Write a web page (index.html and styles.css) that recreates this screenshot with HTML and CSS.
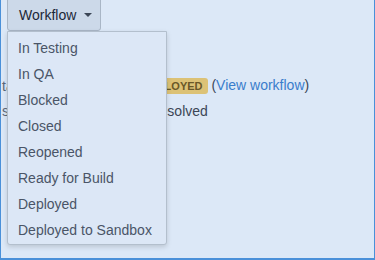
FILE: index.html
```html
<!DOCTYPE html>
<html lang="en">
<head>
    <meta charset="UTF-8">
    <title>Workflow</title>
    <link rel="stylesheet" href="styles.css">
</head>
<body>
    <div class="frame">
        <div class="toolbar">
            <div class="dropdown">
                <button class="dropdown-btn">Workflow <span class="caret"></span></button>
                <ul class="dropdown-menu">
                    <li>In Testing</li>
                    <li>In QA</li>
                    <li>Blocked</li>
                    <li>Closed</li>
                    <li>Reopened</li>
                    <li>Ready for Build</li>
                    <li>Deployed</li>
                    <li>Deployed to Sandbox</li>
                </ul>
            </div>
        </div>

        <div class="details">
            <div class="detail-label">tatus:</div>
            <div class="detail-value"><span class="badge">Deployed</span> (<a href="#">View workflow</a>)</div>
            <div class="detail-label">solution:</div>
            <div class="detail-value">Unresolved</div>
        </div>
    </div>
</body>
</html>
```

FILE: styles.css
```css
* {
    margin: 0;
    padding: 0;
    box-sizing: border-box;
}

body {
    font-family: 'Liberation Sans', Arial, sans-serif;
    font-size: 14px;
    color: #3b4656;
    background: #dce8f7;
}

.frame {
    height: 260px;
    background: #dce8f7;
    border-left: 1px solid #4a90d9;
    border-right: 1px solid #4a90d9;
    border-bottom: 2px solid #4a90d9;
    overflow: hidden;
}

.toolbar {
    padding-left: 6px;
    height: 31px;
}

.dropdown {
    position: relative;
    display: inline-block;
}

.dropdown-btn {
    display: flex;
    align-items: center;
    gap: 8px;
    width: 94px;
    height: 32px;
    margin-top: -1px;
    padding: 0 0 0 11px;
    font-family: inherit;
    font-size: 14px;
    color: #1b2838;
    background: #ccd9e9;
    border: 1px solid #a9b6c6;
    border-radius: 0 0 3px 3px;
}

.caret {
    width: 0;
    height: 0;
    border-left: 4px solid transparent;
    border-right: 4px solid transparent;
    border-top: 4px solid #3b4656;
}

.dropdown-menu {
    position: absolute;
    top: 31px;
    left: 0;
    width: 160px;
    list-style: none;
    padding: 3px 0 1px;
    background: #dce7f6;
    border: 1px solid #b3bfcd;
    border-radius: 0 0 3px 3px;
    box-shadow: 0 2px 5px rgba(0, 0, 0, 0.15);
    z-index: 10;
}

.dropdown-menu li {
    height: 26px;
    line-height: 26px;
    padding-left: 10px;
    color: #4a5567;
    white-space: nowrap;
}

.details {
    display: grid;
    grid-template-columns: 135px auto;
    row-gap: 9px;
    align-items: center;
    padding: 46px 0 0 1px;
}

.detail-label {
    color: #5b6778;
}

.detail-value {
    color: #3b4656;
}

.badge {
    display: inline-block;
    padding: 2px 5px;
    font-size: 11px;
    font-weight: bold;
    text-transform: uppercase;
    color: #6a5828;
    background: #dcc276;
    border-radius: 3px;
}

.detail-value a {
    color: #3a7dcc;
    text-decoration: none;
}
```
